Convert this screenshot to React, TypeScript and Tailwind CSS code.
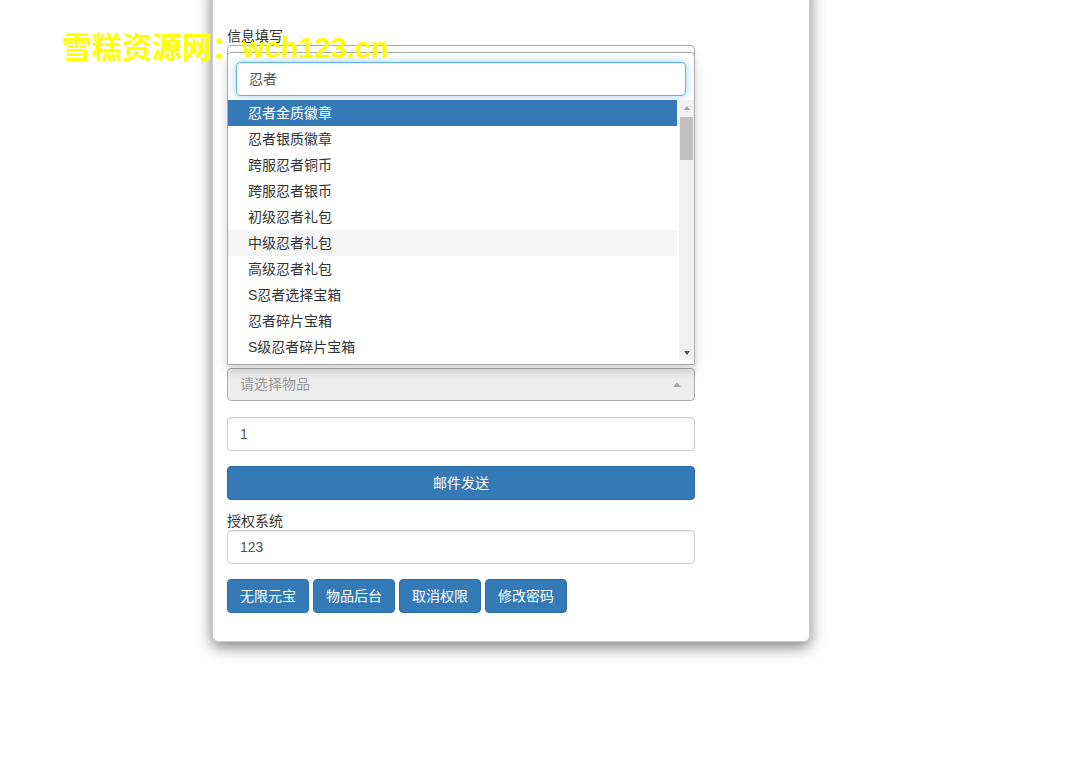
import React from "react";

const items = [
  "忍者金质徽章",
  "忍者银质徽章",
  "跨服忍者铜币",
  "跨服忍者银币",
  "初级忍者礼包",
  "中级忍者礼包",
  "高级忍者礼包",
  "S忍者选择宝箱",
  "忍者碎片宝箱",
  "S级忍者碎片宝箱",
];

function Field({ value, className = "" }: { value?: string; className?: string }) {
  return (
    <div
      className={`flex h-[34px] items-center rounded-[4px] border border-[#ccc] bg-white px-[12px] text-[14px] text-[#555] shadow-[inset_0_1px_1px_rgba(0,0,0,0.075)] ${className}`}
    >
      {value}
    </div>
  );
}

// the open select2 list, shown above its box
function Dropdown() {
  return (
    <div className="absolute left-0 top-[7px] w-full rounded-t-[4px] border border-[#aaa] bg-white shadow-[0_6px_12px_rgba(0,0,0,0.175)]">
      <div className="px-[8px] pb-[4px] pt-[9px]">
        <div className="flex h-[34px] items-center rounded-[4px] border border-[#66afe9] px-[12px] text-[14px] text-[#555] shadow-[inset_0_1px_1px_rgba(0,0,0,0.075),0_0_8px_rgba(102,175,233,0.6)]">
          忍者
        </div>
      </div>
      <div className="flex h-[260px]">
        <ul className="flex-1 overflow-hidden">
          {items.map((t, i) => (
            <li
              key={t}
              className={`mr-[2px] h-[26px] pl-[20px] text-[14px] leading-[26px] ${
                i === 0 ? "bg-[#337ab7] text-white" : i === 5 ? "bg-[#f5f5f5] text-[#333]" : "text-[#333]"
              }`}
            >
              {t}
            </li>
          ))}
        </ul>
        <div className="flex w-[15px] flex-col bg-[#f1f1f1]">
          <div className="flex h-[15px] items-center justify-center">
            <div className="h-0 w-0 border-x-[3.5px] border-b-[4px] border-x-transparent border-b-[#a3a3a3]" />
          </div>
          <div className="mx-[1px] mt-[2px] h-[43px] bg-[#c1c1c1]" />
          <div className="flex-1" />
          <div className="flex h-[15px] items-center justify-center">
            <div className="h-0 w-0 border-x-[3.5px] border-t-[4px] border-x-transparent border-t-[#505050]" />
          </div>
        </div>
      </div>
      <div className="h-[4px]" />
    </div>
  );
}

export default function App() {
  return (
    <div className="relative h-[784px] overflow-hidden bg-white font-['Liberation_Sans','Noto_Sans_CJK_SC',sans-serif] text-[#333]">
      <div className="pl-[212px]">
        <div className="-mt-[20px] w-[598px] rounded-[6px] border border-black/20 bg-white pb-[28px] pl-[14px] pt-[46px] shadow-[0_5px_15px_rgba(0,0,0,0.5)]">
          <div className="flex w-[468px] flex-col">
            <label className="h-[18px] text-[14px] leading-[18px]">信息填写</label>
            <div className="relative flex flex-col">
              <div className="h-[34px] rounded-[4px] border border-[#aaa] bg-white" />
              <Field className="mt-[39px]" />
              <Field className="mt-[16px]" />
              <Field className="mt-[16px]" />
              <Field className="mt-[16px]" />
              <div className="mt-[16px] h-[34px] rounded-[4px] border border-[#d43f3a] bg-[#d9534f]" />
              <div className="mt-[16px] flex h-[33px] items-center justify-between rounded-[4px] border border-[#aaa] bg-[#eee] pl-[12px] pr-[13px] text-[14px] text-[#999]">
                <span>请选择物品</span>
                <div className="h-0 w-0 border-x-[4px] border-b-[5px] border-x-transparent border-b-[#aaa]" />
              </div>
              <Dropdown />
            </div>
            <Field className="mt-[16px]" value="1" />
            <button className="mt-[15px] h-[34px] rounded-[4px] border border-[#2e6da4] bg-[#337ab7] text-[14px] text-white">
              邮件发送
            </button>
            <label className="mt-[12px] h-[18px] text-[14px] leading-[18px]">授权系统</label>
            <Field value="123" />
            <div className="mt-[15px] flex gap-[4px]">
              {["无限元宝", "物品后台", "取消权限", "修改密码"].map((b) => (
                <button
                  key={b}
                  className="h-[34px] rounded-[4px] border border-[#2e6da4] bg-[#337ab7] px-[12px] text-[14px] text-white"
                >
                  {b}
                </button>
              ))}
            </div>
          </div>
        </div>
      </div>
      <div className="absolute left-[62px] top-[33px] text-[30px] font-bold leading-[30px] text-[#ffff00]">
        雪糕资源网：<span className="text-[29px]">wch123.cn</span>
      </div>
    </div>
  );
}
